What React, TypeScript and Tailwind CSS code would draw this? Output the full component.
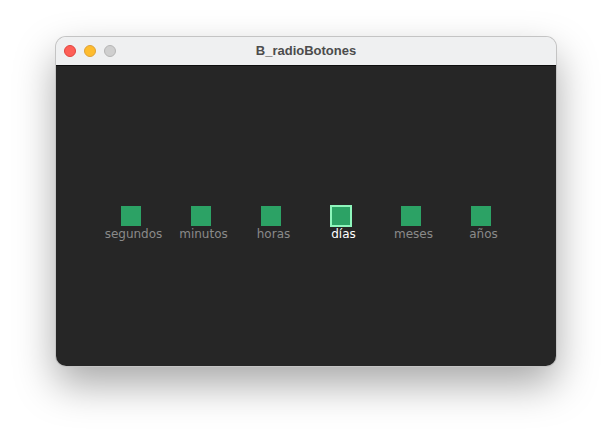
import React, { useState } from 'react';

const labels = ['segundos', 'minutos', 'horas', 'días', 'meses', 'años'];

const RadioItem: React.FC<{ label: string; selected: boolean; onSelect: () => void }> = ({
  label,
  selected,
  onSelect,
}) => (
  <button type="button" onClick={onSelect} className="flex w-[70px] flex-col items-center">
    <span className="flex h-[20px] w-[20px] items-center justify-center">
      {selected ? (
        <span className="h-[22px] w-[22px] shrink-0 border-2 border-[#8ef6bc] bg-[#2ca265]" />
      ) : (
        <span className="h-[20px] w-[20px] bg-[#2ca265]" />
      )}
    </span>
    <span
      className={`ml-[5px] mt-[1px] text-[12px] leading-[15px] ${selected ? 'text-white' : 'text-[#8a8a8a]'}`}
      style={{ fontFamily: '"DejaVu Sans", sans-serif' }}
    >
      {label}
    </span>
  </button>
);

const App: React.FC = () => {
  const [selected, setSelected] = useState<number>(3);

  return (
    <div className="h-[440px] w-[612px] bg-white pl-[56px] pt-[37px]">
      <div className="w-[500px] overflow-hidden rounded-[10px] shadow-[0_18px_40px_rgba(0,0,0,0.35)] ring-1 ring-[#c4c4c4]">
        {/* Title bar */}
        <div className="relative flex h-[29px] items-center border-b border-[#0e0e0e] bg-[#eff0f1]">
          <div className="absolute left-[8px] top-[8px] flex gap-[8px]">
            <span className="h-[12px] w-[12px] rounded-full border border-[#e0443e] bg-[#fe5f57]" />
            <span className="h-[12px] w-[12px] rounded-full border border-[#dea236] bg-[#febc2e]" />
            <span className="h-[12px] w-[12px] rounded-full border border-[#b5b5b5] bg-[#cfcfcf]" />
          </div>
          <div
            className="w-full text-center text-[13px] font-bold text-[#4c4c4c]"
            style={{ fontFamily: '"Liberation Sans", Arial, sans-serif' }}
          >
            B_radioBotones
          </div>
        </div>
        {/* Content */}
        <div className="h-[300px] bg-[#262626] pt-[140px]">
          <div className="flex justify-center">
            {labels.map((label, index) => (
              <RadioItem
                key={label}
                label={label}
                selected={selected === index}
                onSelect={() => setSelected(index)}
              />
            ))}
          </div>
        </div>
      </div>
    </div>
  );
};

export default App;
